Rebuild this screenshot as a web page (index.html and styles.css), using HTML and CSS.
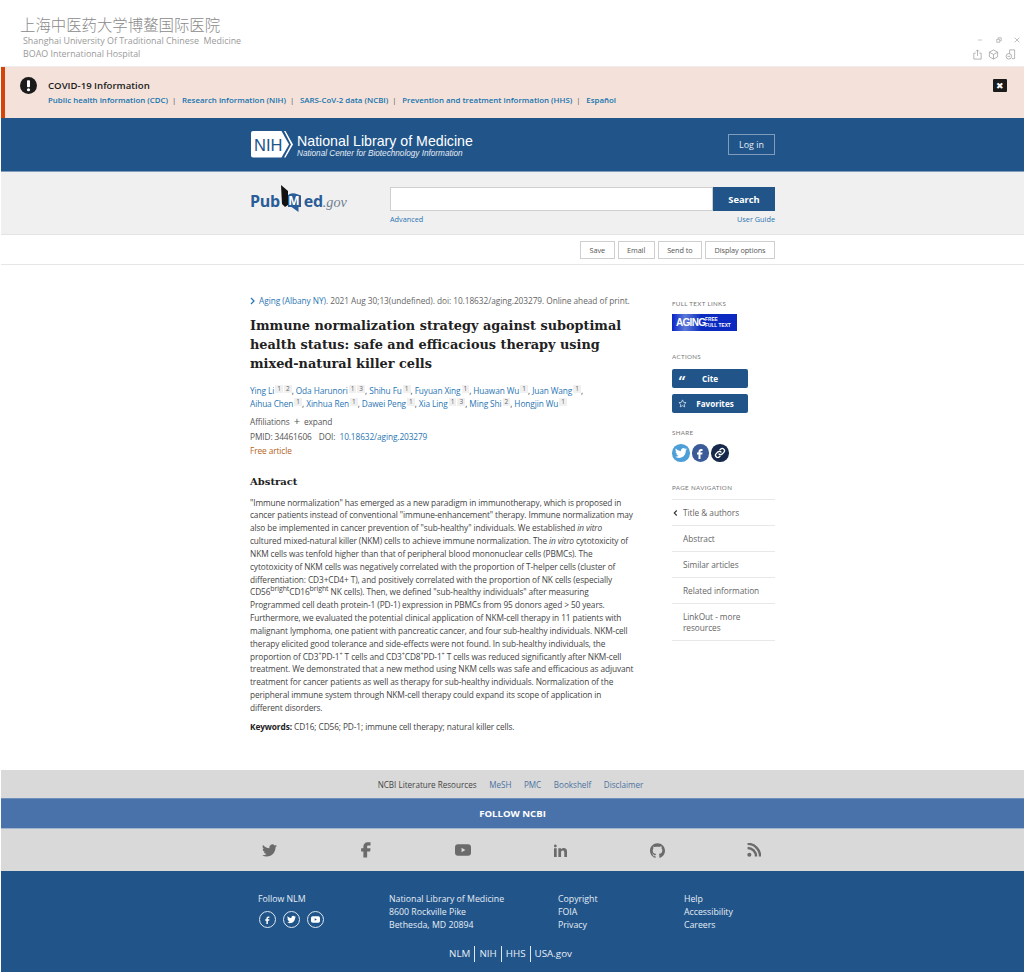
FILE: index.html
```html
<!DOCTYPE html>
<html lang="en">
<head>
<meta charset="utf-8">
<title>Immune normalization strategy - PubMed</title>
<link rel="stylesheet" href="styles.css">
</head>
<body>
<header class="app-head">
  <div class="hospital">
    <div class="hospital-cn">上海中医药大学博鳌国际医院</div>
    <div class="hospital-en">Shanghai University Of Traditional Chinese &nbsp;Medicine</div>
    <div class="hospital-en">BOAO International Hospital</div>
  </div>
  <div class="win-tools">
    <div class="win-row">
      <svg class="win-ic" viewBox="0 0 8 8"><path d="M1 4h6" stroke="#bbb" fill="none"/></svg>
      <svg class="win-ic" viewBox="0 0 8 8"><path d="M1 3h4v4H1zM3 3V1h4v4H5" stroke="#aaa" fill="none"/></svg>
      <svg class="win-ic" viewBox="0 0 8 8"><path d="M1 1l6 6M7 1L1 7" stroke="#aaa" fill="none"/></svg>
    </div>
    <div class="win-row win-row2">
      <svg class="tool-ic" viewBox="0 0 12 12"><path d="M4 4.500H2v6.500h8V4.500H8M6 7.500V1M4.300 2.700L6 1l1.700 1.700" stroke="#999" fill="none" stroke-width=".8"/></svg>
      <svg class="tool-ic" viewBox="0 0 12 12"><path d="M6 1l4.500 2.500v5L6 11 1.500 8.500v-5zM1.500 3.500L6 6l4.500-2.500M6 6v5" stroke="#999" fill="none" stroke-width=".8"/></svg>
      <svg class="tool-ic" viewBox="0 0 12 12"><path d="M5 5V1h5.500v9.500H7.500" stroke="#999" fill="none" stroke-width=".8"/><circle cx="4.200" cy="8" r="3" stroke="#999" fill="none" stroke-width=".8"/><path d="M2.700 8h3" stroke="#999" stroke-width=".8"/></svg>
    </div>
  </div>
</header>

<section class="alert">
  <svg class="alert-ic" viewBox="0 0 16 16"><circle cx="8" cy="8" r="8" fill="#1b1b1b"/><rect x="6.600" y="3" width="2.800" height="6.600" rx=".8" fill="#fff"/><circle cx="8" cy="12" r="1.500" fill="#fff"/></svg>
  <div class="alert-body">
    <div class="alert-title">COVID-19 Information</div>
    <div class="alert-links">
      <a>Public health information (CDC)</a><span class="pipe">|</span>
      <a>Research information (NIH)</a><span class="pipe">|</span>
      <a>SARS-CoV-2 data (NCBI)</a><span class="pipe">|</span>
      <a>Prevention and treatment information (HHS)</a><span class="pipe">|</span>
      <a>Español</a>
    </div>
  </div>
  <div class="alert-close">✖</div>
</section>

<section class="nih-bar">
  <div class="wrap nih-inner">
    <div class="nih-logo">
      <svg class="nih-badge" viewBox="0 0 42 27"><path d="M2 0h28.500l7.500 13.500L30.500 26.500H2a2 2 0 0 1-2-2V2a2 2 0 0 1 2-2z" fill="#fff"/><path d="M33 0h1.500l7.500 13.500-7.500 13H33l7-13z" fill="#fff"/></svg>
      <span class="nih-badge-text">NIH</span>
      <div class="nih-text">
        <div class="nih-t1">National Library of Medicine</div>
        <div class="nih-t2">National Center for Biotechnology Information</div>
      </div>
    </div>
    <div class="login">Log in</div>
  </div>
</section>

<section class="search-bar">
  <div class="wrap search-inner">
    <div class="pm-logo">
      <span class="pm-word">Pub</span>
      <span class="pm-mark">
        <svg class="pm-book" viewBox="0 0 22 27"><path d="M1 0l7 6v14l-3 2-3-3z" fill="#111"/><path d="M8 10q3-2.500 7-1.500l6 2V22h-2.500v5l-7-5H8z" fill="#2a5d97"/></svg>
        <span class="pm-m">M</span>
      </span>
      <span class="pm-word">ed</span><span class="pm-gov">.gov</span>
    </div>
    <div class="search-col">
      <div class="search-row">
        <div class="search-input"></div>
        <div class="search-btn">Search</div>
      </div>
      <div class="search-links"><a>Advanced</a><a>User Guide</a></div>
    </div>
  </div>
</section>

<section class="action-bar">
  <div class="wrap action-inner">
    <div class="act-btn">Save</div>
    <div class="act-btn">Email</div>
    <div class="act-btn">Send to</div>
    <div class="act-btn">Display options</div>
  </div>
</section>

<main class="wrap main">
  <article class="article">
    <div class="cite"><svg class="cite-ic" viewBox="0 0 6 8"><path d="M1 1l3 3-3 3" fill="none" stroke="#2a7ab8" stroke-width="1.300"/></svg><a>Aging (Albany NY)</a><span>. 2021 Aug 30;13(undefined). doi: 10.18632/aging.203279. Online ahead of print.</span></div>
    <h1 class="title">Immune normalization strategy against suboptimal<br>health status: safe and efficacious therapy using<br>mixed-natural killer cells</h1>
    <div class="authors">
      <a>Ying Li</a><sup>1</sup><sup>2</sup>, <a>Oda Harunori</a><sup>1</sup><sup>3</sup>, <a>Shihu Fu</a><sup>1</sup>, <a>Fuyuan Xing</a><sup>1</sup>, <a>Huawan Wu</a><sup>1</sup>, <a>Juan Wang</a><sup>1</sup>,<br>
      <a>Aihua Chen</a><sup>1</sup>, <a>Xinhua Ren</a><sup>1</sup>, <a>Dawei Peng</a><sup>1</sup>, <a>Xia Ling</a><sup>1</sup><sup>3</sup>, <a>Ming Shi</a><sup>2</sup>, <a>Hongjin Wu</a><sup>1</sup>
    </div>
    <div class="meta">Affiliations <span class="plus">+</span> expand</div>
    <div class="meta">PMID: 34461606 <span class="doi">&nbsp;&nbsp;DOI:</span> <a class="doi-link">10.18632/aging.203279</a></div>
    <div class="meta free">Free article</div>
    <h2 class="abs-head">Abstract</h2>
    <p class="abs">"Immune normalization" has emerged as a new paradigm in immunotherapy, which is proposed in<br>cancer patients instead of conventional "immune-enhancement" therapy. Immune normalization may<br>also be implemented in cancer prevention of "sub-healthy" individuals. We established <em>in vitro</em><br>cultured mixed-natural killer (NKM) cells to achieve immune normalization. The <em>in vitro</em> cytotoxicity of<br>NKM cells was tenfold higher than that of peripheral blood mononuclear cells (PBMCs). The<br>cytotoxicity of NKM cells was negatively correlated with the proportion of T-helper cells (cluster of<br>differentiation: CD3+CD4+ T), and positively correlated with the proportion of NK cells (especially<br>CD56<sup class="sup-w">bright</sup>CD16<sup class="sup-w">bright</sup> NK cells). Then, we defined "sub-healthy individuals" after measuring<br>Programmed cell death protein-1 (PD-1) expression in PBMCs from 95 donors aged &gt; 50 years.<br>Furthermore, we evaluated the potential clinical application of NKM-cell therapy in 11 patients with<br>malignant lymphoma, one patient with pancreatic cancer, and four sub-healthy individuals. NKM-cell<br>therapy elicited good tolerance and side-effects were not found. In sub-healthy individuals, the<br>proportion of CD3<sup>+</sup>PD-1<sup>+</sup> T cells and CD3<sup>+</sup>CD8<sup>+</sup>PD-1<sup>+</sup> T cells was reduced significantly after NKM-cell<br>treatment. We demonstrated that a new method using NKM cells was safe and efficacious as adjuvant<br>treatment for cancer patients as well as therapy for sub-healthy individuals. Normalization of the<br>peripheral immune system through NKM-cell therapy could expand its scope of application in<br>different disorders.</p>
    <p class="abs kw"><strong>Keywords:</strong> CD16; CD56; PD-1; immune cell therapy; natural killer cells.</p>
  </article>

  <aside class="side">
    <div class="side-head">FULL TEXT LINKS</div>
    <div class="aging-logo"><span class="aging-word">AGING</span><span class="aging-free">FREE<br>FULL TEXT</span></div>
    <div class="side-head side-gap">ACTIONS</div>
    <div class="side-btn"><span class="side-btn-ic">“</span><span class="side-btn-lbl cite-lbl">Cite</span></div>
    <div class="side-btn"><svg class="star" viewBox="0 0 10 10"><path d="M5 1l1.200 2.700 2.800.3-2.100 1.900.6 2.900L5 7.400 2.500 8.800l.6-2.900L1 4l2.800-.3z" fill="none" stroke="#fff" stroke-width=".7"/></svg><span class="side-btn-lbl">Favorites</span></div>
    <div class="side-head side-gap2">SHARE</div>
    <div class="share">
      <span class="share-c tw"><svg viewBox="0 0 24 24"><path fill="#fff" d="M23.953 4.57a10 10 0 01-2.825.775 4.958 4.958 0 002.163-2.723c-.951.555-2.005.959-3.127 1.184a4.92 4.92 0 00-8.384 4.482C7.69 8.095 4.067 6.13 1.64 3.162a4.822 4.822 0 00-.666 2.475c0 1.71.87 3.213 2.188 4.096a4.904 4.904 0 01-2.228-.616v.06a4.923 4.923 0 003.946 4.827 4.996 4.996 0 01-2.212.085 4.936 4.936 0 004.604 3.417 9.867 9.867 0 01-6.102 2.105c-.39 0-.779-.023-1.17-.067a13.995 13.995 0 007.557 2.209c9.053 0 13.998-7.496 13.998-13.985 0-.21 0-.42-.015-.63A9.935 9.935 0 0024 4.59z"/></svg></span>
      <span class="share-c fb"><svg viewBox="0 0 24 24"><path fill="#fff" d="M14 8h3V4h-3c-2.800 0-5 2.200-5 5v2H6v4h3v9h4v-9h3.500l.5-4h-4V9c0-.6.4-1 1-1z"/></svg></span>
      <span class="share-c ln"><svg viewBox="0 0 24 24"><g fill="none" stroke="#fff" stroke-width="2.600" stroke-linecap="round"><path d="M10 14a4.500 4.500 0 0 0 6.400 0l3.200-3.200a4.500 4.500 0 0 0-6.400-6.400L12 5.600"/><path d="M14 10a4.500 4.500 0 0 0-6.400 0l-3.200 3.200a4.500 4.500 0 0 0 6.400 6.400l1.200-1.200"/></g></svg></span>
    </div>
    <div class="side-head side-gap3">PAGE NAVIGATION</div>
    <nav class="pnav">
      <div class="pnav-item"><svg class="pnav-ic" viewBox="0 0 6 8"><path d="M4.500 1L1.500 4l3 3" fill="none" stroke="#333" stroke-width="1.300"/></svg>Title &amp; authors</div>
      <div class="pnav-item">Abstract</div>
      <div class="pnav-item">Similar articles</div>
      <div class="pnav-item">Related information</div>
      <div class="pnav-item pnav-two">LinkOut - more resources</div>
    </nav>
  </aside>
</main>

<footer class="foot">
  <div class="lit">
    <span class="lit-t">NCBI Literature Resources</span><a>MeSH</a><a>PMC</a><a>Bookshelf</a><a>Disclaimer</a>
  </div>
  <div class="follow">FOLLOW NCBI</div>
  <div class="socials">
    <svg class="s-tw" viewBox="0 0 24 24"><path fill="#6b6b6b" d="M23.953 4.57a10 10 0 01-2.825.775 4.958 4.958 0 002.163-2.723c-.951.555-2.005.959-3.127 1.184a4.92 4.92 0 00-8.384 4.482C7.69 8.095 4.067 6.13 1.64 3.162a4.822 4.822 0 00-.666 2.475c0 1.71.87 3.213 2.188 4.096a4.904 4.904 0 01-2.228-.616v.06a4.923 4.923 0 003.946 4.827 4.996 4.996 0 01-2.212.085 4.936 4.936 0 004.604 3.417 9.867 9.867 0 01-6.102 2.105c-.39 0-.779-.023-1.17-.067a13.995 13.995 0 007.557 2.209c9.053 0 13.998-7.496 13.998-13.985 0-.21 0-.42-.015-.63A9.935 9.935 0 0024 4.59z"/></svg>
    <svg class="s-fb" viewBox="0 2 24 24"><path fill="#6b6b6b" d="M14 8h4V3.500h-4c-3 0-5.500 2.200-5.500 5.500v2.500H5.500V16h3v8h5v-8h4l.5-4.500h-4.500V9c0-.6.400-1 1-1z"/></svg>
    <svg class="s-yt" viewBox="0 0 24 24"><rect y="3.500" width="24" height="17" rx="4.500" fill="#6b6b6b"/><path d="M9.800 8.500v7l5.800-3.500z" fill="#d9d9d9"/></svg>
    <svg class="s-in" viewBox="0 0 24 24"><path fill="#6b6b6b" d="M4.980 3.500C4.980 4.881 3.870 6 2.500 6S.02 4.881.02 3.500C.02 2.120 1.130 1 2.500 1s2.480 1.120 2.480 2.500zM5 8H0v16h5V8zm7.982 0H8.014v16h4.969v-8.399c0-4.670 6.029-5.052 6.029 0V24H24V13.869c0-7.880-8.922-7.593-11.018-3.714V8z"/></svg>
    <svg class="s-gh" viewBox="0 0 24 24"><path fill="#6b6b6b" d="M12 .297c-6.630 0-12 5.373-12 12 0 5.303 3.438 9.800 8.205 11.385.6.113.82-.258.82-.577 0-.285-.01-1.040-.015-2.040-3.338.724-4.042-1.610-4.042-1.610C4.422 18.070 3.633 17.700 3.633 17.700c-1.087-.744.084-.729.084-.729 1.205.084 1.838 1.236 1.838 1.236 1.070 1.835 2.809 1.305 3.495.998.108-.776.417-1.305.76-1.605-2.665-.3-5.466-1.332-5.466-5.930 0-1.310.465-2.380 1.235-3.220-.135-.303-.54-1.523.105-3.176 0 0 1.005-.322 3.300 1.230.96-.267 1.980-.399 3-.405 1.020.006 2.040.138 3 .405 2.280-1.552 3.285-1.230 3.285-1.230.645 1.653.24 2.873.12 3.176.765.84 1.230 1.910 1.230 3.220 0 4.610-2.805 5.625-5.475 5.920.42.36.81 1.096.81 2.220 0 1.606-.015 2.896-.015 3.286 0 .315.21.69.825.57C20.565 22.092 24 17.592 24 12.297c0-6.627-5.373-12-12-12"/></svg>
    <svg class="s-rs" viewBox="0 0 24 24"><circle cx="4" cy="20" r="3.500" fill="#6b6b6b"/><path d="M1 8.500c8 0 14.500 6.500 14.500 14.500M1 1.500c12 0 21.500 9.500 21.500 21.500" fill="none" stroke="#6b6b6b" stroke-width="4.200"/></svg>
  </div>
  <div class="nlm">
    <div class="nlm-grid">
      <div class="nlm-col c1">
        <div>Follow NLM</div>
        <div class="nlm-social">
          <span class="ring"><svg viewBox="0 0 24 24"><path fill="#fff" d="M14 8h3V4h-3c-2.800 0-5 2.200-5 5v2H6v4h3v9h4v-9h3.500l.5-4h-4V9c0-.6.4-1 1-1z"/></svg></span>
          <span class="ring"><svg viewBox="0 0 24 24"><path fill="#fff" d="M23.953 4.570a10 10 0 01-2.825.775 4.958 4.958 0 002.163-2.723c-.951.555-2.005.959-3.127 1.184a4.920 4.920 0 00-8.384 4.482C7.690 8.095 4.067 6.130 1.640 3.162a4.822 4.822 0 00-.666 2.475c0 1.710.870 3.213 2.188 4.096a4.904 4.904 0 01-2.228-.616v.06a4.923 4.923 0 003.946 4.827 4.996 4.996 0 01-2.212.085 4.936 4.936 0 004.604 3.417 9.867 9.867 0 01-6.102 2.105c-.39 0-.779-.023-1.170-.067a13.995 13.995 0 007.557 2.209c9.053 0 13.998-7.496 13.998-13.985 0-.21 0-.42-.015-.63A9.935 9.935 0 0024 4.590z"/></svg></span>
          <span class="ring"><svg viewBox="0 0 24 24"><rect y="3.500" width="24" height="17" rx="4.500" fill="#fff"/><path d="M9.800 8.500v7l5.800-3.500z" fill="#21558a"/></svg></span>
        </div>
      </div>
      <div class="nlm-col c2"><div>National Library of Medicine</div><div>8600 Rockville Pike</div><div>Bethesda, MD 20894</div></div>
      <div class="nlm-col c3"><div>Copyright</div><div>FOIA</div><div>Privacy</div></div>
      <div class="nlm-col c4"><div>Help</div><div>Accessibility</div><div>Careers</div></div>
    </div>
    <div class="nlm-bottom"><a>NLM</a><a>NIH</a><a>HHS</a><a>USA.gov</a></div>
  </div>
</footer>
</body>
</html>
```
FILE: styles.css
```css
* { box-sizing: border-box; }
html, body { margin: 0; padding: 0; }
body {
  width: 1024px;
  min-height: 972px;
  display: flex;
  flex-direction: column;
  font-family: "Open Sans", "Noto Sans", sans-serif;
  font-size: 8.3px;
  color: #444;
  background: #fff;
  padding-left: 1px;
  overflow-x: hidden;
}
a { color: #2a75b3; text-decoration: none; }
.wrap { width: 525px; margin: 0 auto; }

.app-head { height: 67px; flex: none; display: flex; justify-content: space-between; border-bottom: 1px solid #eeeeee; padding: 13px 4px 0 20px; }
.hospital-cn { font-family: "Noto Sans CJK SC", sans-serif; font-weight: 300; font-size: 15.4px; line-height: 22px; color: #8a8a8a; margin-left: -1px; }
.hospital-en { font-size: 8.9px; line-height: 12.5px; color: #9a9a9a; padding-left: 2px; }
.win-tools { padding-top: 24px; width: 48px; }
.win-row { display: flex; justify-content: space-between; padding: 0 0 0 5px; height: 8px; }
.win-ic { width: 6px; height: 6px; }
.win-row2 { margin-top: 4px; padding: 0 4.5px 0 0; height: 12px; }
.tool-ic { width: 11px; height: 11px; }

.alert { height: 51px; flex: none; background: #f4e2da; border-left: 4px solid #d54309; display: flex; padding: 10px 17px 0 15px; }
.alert-ic { width: 17px; height: 17px; flex: none; margin: 0 11px 0 0; }
.alert-body { flex: 1; }
.alert-title { font-size: 9.6px; font-weight: 600; color: #1b1b1b; line-height: 17px; }
.alert-links { font-size: 7.9px; font-weight: 600; line-height: 13px; }
.alert-links a { color: #1473ae; }
.pipe { color: #555; margin: 0 3.5px 0 4px; font-weight: 400; }
.alert-close { width: 14px; height: 13px; background: #1b1b1b; color: #fff; font-size: 9px; line-height: 13px; text-align: center; border-radius: 1px; margin-top: 2px; }

.nih-bar { height: 54px; flex: none; background: #21558a; border-bottom: 1px solid #7f9cbc; }
.nih-inner { height: 53px; display: flex; justify-content: space-between; align-items: center; }
.nih-logo { position: relative; display: flex; align-items: center; gap: 4px; padding-left: 1px; }
.nih-badge { width: 42px; height: 27px; display: block; }
.nih-badge-text { position: absolute; left: 4px; top: 3px; font-family: "Liberation Sans", sans-serif; font-size: 16.5px; line-height: 22px; color: #21558a; }
.nih-text { font-family: "Liberation Sans", sans-serif; color: #fff; padding-top: 2px; }
.nih-t1 { font-size: 14.2px; line-height: 16px; }
.nih-t2 { font-size: 8.2px; font-style: italic; line-height: 9px; color: #e4ebf3; }
.login { width: 47px; height: 21px; border: 1px solid #7f9cbc; color: #e6edf5; font-size: 8.9px; line-height: 19px; text-align: center; }

.search-bar { height: 63px; flex: none; background: #f0f0f0; border-bottom: 1px solid #e3e3e3; }
.search-inner { display: flex; height: 62px; }
.pm-logo { width: 140px; display: flex; align-items: baseline; padding: 19px 0 0 0; height: 50px; }
.pm-word { font-weight: 700; font-size: 16px; line-height: 20px; color: #2a5d97; letter-spacing: -.3px; }
.pm-mark { position: relative; width: 22px; height: 20px; flex: none; align-self: flex-start; margin: 0 2px 0 0; }
.pm-book { position: absolute; left: 0; top: -6px; width: 22px; height: 27px; display: block; }
.pm-m { position: absolute; left: 8.5px; top: 3px; color: #fff; font-weight: 700; font-size: 12px; line-height: 14px; }
.pm-gov { font-family: "Liberation Serif", serif; font-style: italic; font-size: 14.2px; color: #6f7f92; }
.search-col { width: 385px; padding-top: 15px; }
.search-row { display: flex; height: 24px; }
.search-input { flex: 1; background: #fff; border: 1px solid #cfcfcf; }
.search-btn { width: 62px; background: #21558a; color: #fff; font-size: 9.3px; font-weight: 700; line-height: 25px; text-align: center; }
.search-links { display: flex; justify-content: space-between; font-size: 7.3px; line-height: 11px; margin-top: 3px; }

.action-bar { height: 30px; flex: none; border-bottom: 1px solid #e6e6e6; }
.action-inner { display: flex; justify-content: flex-end; gap: 3px; padding-top: 6px; }
.act-btn { height: 18px; border: 1px solid #cfcfcf; font-size: 7.3px; letter-spacing: -.08px; line-height: 16px; padding: 0 8.5px; color: #555; }

.main { flex: 1; display: flex; justify-content: space-between; padding-top: 30px; }
.article { width: 388px; }
.cite { font-size: 8.3px; letter-spacing: -.05px; line-height: 12px; color: #666; white-space: nowrap; display: flex; align-items: center; }
.cite-ic { width: 6px; height: 8px; margin-right: 3px; flex: none; }
.title { font-family: "DejaVu Serif", serif; font-weight: 700; font-size: 12.85px; line-height: 19px; color: #212121; margin: 9px 0 0; white-space: nowrap; }
.authors { font-size: 8.3px; letter-spacing: -.1px; line-height: 13px; margin-top: 11px; color: #444; white-space: nowrap; }
.authors sup { display: inline-block; font-size: 6.5px; line-height: 8px; background: #f0f0f0; color: #666; padding: 0 2px; margin-left: 1px; vertical-align: 3px; letter-spacing: 0; }
.meta { font-size: 8.3px; letter-spacing: -.1px; line-height: 14.5px; color: #555; }
.authors + .meta { margin-top: 5px; }
.plus { font-size: 11px; line-height: 10px; margin: 0 2px; }
.doi { margin-left: 1px; }
.doi-link { margin-left: 2px; }
.free { color: #b5641c; }
.abs-head { font-family: "DejaVu Serif", serif; font-weight: 700; font-size: 10px; line-height: 14px; color: #212121; margin: 16px 0 0; }
.abs { font-size: 8.3px; letter-spacing: -.1px; line-height: 12.85px; margin: 8px 0 0; color: #444; white-space: nowrap; }
.abs sup { font-size: 5.5px; line-height: 0; }
.abs .sup-w { font-size: 7px; }
.kw { margin-top: 6px; }
.kw strong { color: #222; }

.side { width: 103px; padding-top: 4px; }
.side-head { font-family: "Lato", sans-serif; font-size: 6.2px; line-height: 9px; letter-spacing: .35px; color: #777; }
.aging-logo { width: 65px; height: 17px; margin-top: 6px; background: linear-gradient(90deg, #0a24c8, #5c7ad8 20%, #0a2cc0 45%, #0c28c0); color: #fff; display: flex; align-items: center; font-family: "Liberation Sans", sans-serif; font-weight: 700; overflow: hidden; }
.aging-word { font-size: 10px; letter-spacing: -.7px; margin-left: 4px; width: 29px; flex: none; }
.aging-free { font-size: 4.8px; line-height: 5.5px; flex: none; white-space: nowrap; }
.side-gap { margin-top: 21px; }
.side-btn { width: 76px; height: 19px; background: #21558a; border-radius: 2px; color: #fff; font-size: 8.1px; font-weight: 700; margin-top: 6px; display: flex; align-items: center; position: relative; }
.side-head + .side-btn { margin-top: 8px; }
.side-btn-ic { position: absolute; left: 6px; top: 4px; font-family: "DejaVu Serif", serif; font-weight: 700; font-size: 14px; line-height: 18px; }
.star { position: absolute; left: 6px; top: 5px; width: 9px; height: 9px; }
.side-btn-lbl { width: 100%; text-align: center; padding-left: 10px; }
.cite-lbl { padding-left: 0; }
.side-gap2 { margin-top: 15px; }
.share { display: flex; gap: 2px; margin-top: 7px; }
.share-c { width: 17.5px; height: 17.5px; border-radius: 50%; display: flex; align-items: center; justify-content: center; }
.share-c svg { width: 12px; height: 12px; }
.tw { background: #4d9fd8; }
.fb { background: #3b5a98; }
.ln { background: #16294a; }
.side-gap3 { margin-top: 21px; }
.pnav { margin-top: 7.5px; border-top: 1px solid #e8e8e8; }
.pnav-item { position: relative; font-size: 8.3px; letter-spacing: -.05px; line-height: 12px; padding: 7px 0 6px 11px; border-bottom: 1px solid #e8e8e8; color: #666; height: 26px; }
.pnav-two { height: 37px; padding-right: 16px; line-height: 11px; }
.pnav-ic { position: absolute; left: 1px; top: 9px; width: 5px; height: 8px; }

.foot { flex: none; }
.lit { height: 28px; background: #d9d9d9; display: flex; justify-content: center; align-items: center; gap: 12.6px; font-size: 8.1px; padding-right: 4px; }
.lit-t { color: #444; }
.lit a { color: #4a72a0; }
.follow { height: 31px; background: #4a72aa; border-top: 1px solid #6f8fbb; border-bottom: 1px solid #a4b6cf; color: #fff; font-size: 9.6px; font-weight: 700; line-height: 29px; text-align: center; }
.socials { height: 42px; background: #d9d9d9; display: grid; grid-template-columns: repeat(6, 97px); justify-items: center; align-items: center; padding-left: 219.5px; }
.s-tw { width: 15px; height: 15px; }
.s-fb { width: 18px; height: 18px; }
.s-yt { width: 16px; height: 16px; }
.s-in { width: 13px; height: 13px; }
.s-gh { width: 15px; height: 15px; }
.s-rs { width: 14px; height: 14px; }
.nlm { height: 101px; background: #21558a; color: #e6edf5; font-size: 8.75px; line-height: 13px; }
.nlm-grid { display: flex; padding: 22px 0 0 257px; }
.c1 { width: 131px; }
.c2 { width: 169px; }
.c3 { width: 126px; }
.nlm-social { display: flex; gap: 7px; margin: 5px 0 0 1px; }
.ring { width: 17px; height: 17px; border: 1px solid #dfe7f0; border-radius: 50%; display: flex; align-items: center; justify-content: center; }
.ring svg { width: 9px; height: 9px; }
.nlm-bottom { display: flex; justify-content: center; font-size: 9.8px; line-height: 16px; margin-top: 14px; padding-right: 4px; }
.nlm-bottom a { color: #e6edf5; padding: 0 4px; border-left: 1px solid #dfe7f0; }
.nlm-bottom a:first-child { border-left: 0; }
```
